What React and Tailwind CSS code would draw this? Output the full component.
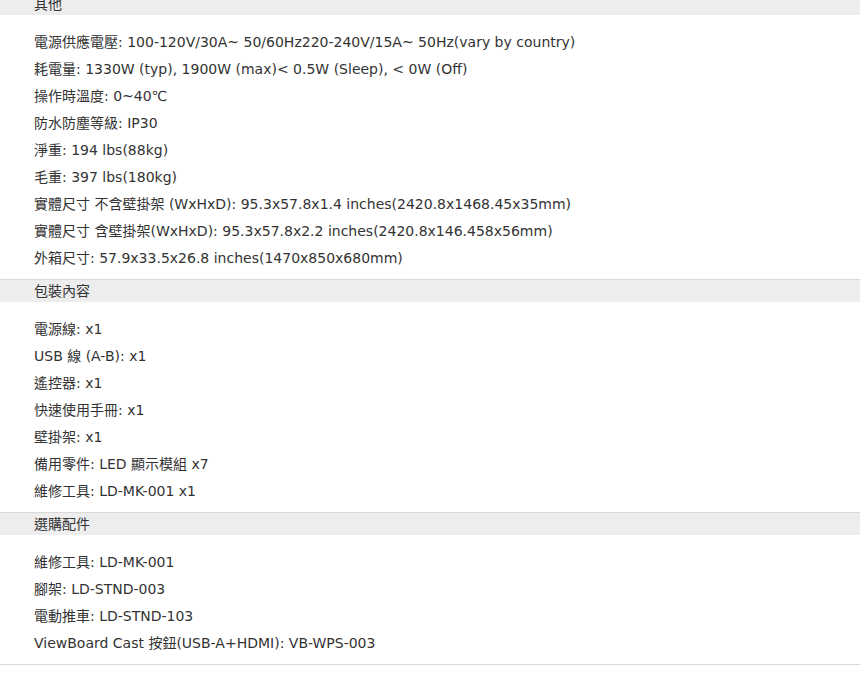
import React from "react";

const sections = [
  {
    title: "其他",
    items: [
      "電源供應電壓: 100-120V/30A~ 50/60Hz220-240V/15A~ 50Hz(vary by country)",
      "耗電量: 1330W (typ), 1900W (max)< 0.5W (Sleep), < 0W (Off)",
      "操作時溫度: 0~40℃",
      "防水防塵等級: IP30",
      "淨重: 194 lbs(88kg)",
      "毛重: 397 lbs(180kg)",
      "實體尺寸 不含壁掛架 (WxHxD): 95.3x57.8x1.4 inches(2420.8x1468.45x35mm)",
      "實體尺寸 含壁掛架(WxHxD): 95.3x57.8x2.2 inches(2420.8x146.458x56mm)",
      "外箱尺寸: 57.9x33.5x26.8 inches(1470x850x680mm)",
    ],
  },
  {
    title: "包裝內容",
    items: [
      "電源線: x1",
      "USB 線 (A-B): x1",
      "遙控器: x1",
      "快速使用手冊: x1",
      "壁掛架: x1",
      "備用零件: LED 顯示模組 x7",
      "維修工具: LD-MK-001 x1",
    ],
  },
  {
    title: "選購配件",
    items: [
      "維修工具: LD-MK-001",
      "腳架: LD-STND-003",
      "電動推車: LD-STND-103",
      "ViewBoard Cast 按鈕(USB-A+HDMI): VB-WPS-003",
    ],
  },
];

export default function App() {
  return (
    <div
      className="w-[860px] h-[682px] overflow-hidden bg-white text-[#333] text-[14px]"
      style={{ fontFamily: '"DejaVu Sans", "Noto Sans CJK TC", sans-serif' }}
    >
      <div className="-mt-[8px] border-b border-[#d9d9d9]">
        {sections.map((s) => (
          <section key={s.title}>
            <div className="h-[23px] border-t border-[#d9d9d9] bg-[#ededed] pl-[34px] leading-[22px]">
              {s.title}
            </div>
            <ul className="pt-[14px] pb-[7px]">
              {s.items.map((it) => (
                <li key={it} className="pl-[34px] leading-[27px] whitespace-nowrap">
                  {it}
                </li>
              ))}
            </ul>
          </section>
        ))}
      </div>
    </div>
  );
}
